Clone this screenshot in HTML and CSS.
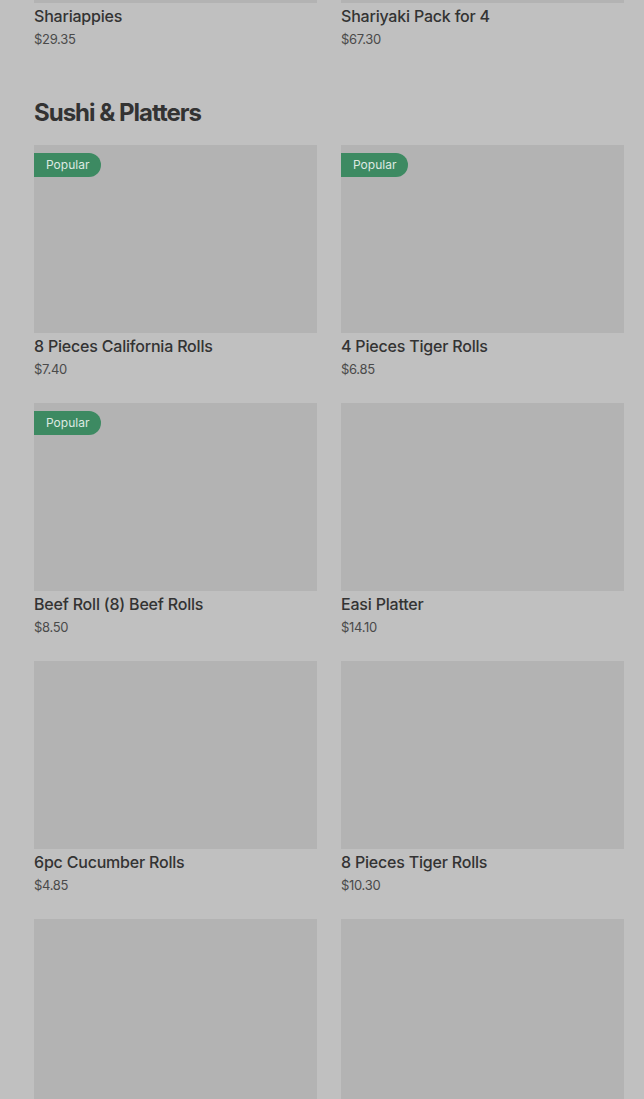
FILE: index.html
```html
<!DOCTYPE html>
<html lang="en">
<head>
<meta charset="utf-8">
<title>Menu</title>
<link rel="stylesheet" href="styles.css">
</head>
<body>
<main class="menu">
  <section class="section">
    <div class="grid">
      <article class="card">
        <div class="thumb"></div>
        <h3 class="name">Shariappies</h3>
        <p class="price">$29.35</p>
      </article>
      <article class="card">
        <div class="thumb"></div>
        <h3 class="name">Shariyaki Pack for 4</h3>
        <p class="price">$67.30</p>
      </article>
    </div>
  </section>

  <section class="section">
    <h2 class="section-title">Sushi &amp; Platters</h2>
    <div class="grid">
      <article class="card">
        <div class="thumb"><span class="badge">Popular</span></div>
        <h3 class="name">8 Pieces California Rolls</h3>
        <p class="price">$7.40</p>
      </article>
      <article class="card">
        <div class="thumb"><span class="badge">Popular</span></div>
        <h3 class="name">4 Pieces Tiger Rolls</h3>
        <p class="price">$6.85</p>
      </article>
      <article class="card">
        <div class="thumb"><span class="badge">Popular</span></div>
        <h3 class="name">Beef Roll (8) Beef Rolls</h3>
        <p class="price">$8.50</p>
      </article>
      <article class="card">
        <div class="thumb"></div>
        <h3 class="name">Easi Platter</h3>
        <p class="price">$14.10</p>
      </article>
      <article class="card">
        <div class="thumb"></div>
        <h3 class="name">6pc Cucumber Rolls</h3>
        <p class="price">$4.85</p>
      </article>
      <article class="card">
        <div class="thumb"></div>
        <h3 class="name">8 Pieces Tiger Rolls</h3>
        <p class="price">$10.30</p>
      </article>
      <article class="card">
        <div class="thumb"></div>
      </article>
      <article class="card">
        <div class="thumb"></div>
      </article>
    </div>
  </section>
</main>
</body>
</html>
```

FILE: styles.css
```css
html, body {
  margin: 0;
  padding: 0;
  background: #c0c0c0;
  overflow: hidden;
}
body {
  font-family: Inter, "Noto Sans", "Liberation Sans", sans-serif;
  color: #333333;
  height: 1099px;
}
.menu {
  padding: 0 20px 0 34px;
  margin-top: -185px;
}
.grid {
  display: grid;
  grid-template-columns: 283px 283px;
  column-gap: 24px;
  row-gap: 25px;
}
.card {
  display: flex;
  flex-direction: column;
}
.thumb {
  position: relative;
  height: 188px;
  background: #b3b3b3;
}
.badge {
  position: absolute;
  left: 0;
  top: 8px;
  height: 24px;
  line-height: 24px;
  padding: 0 12px;
  background: #3d8a62;
  color: #dde9e1;
  font-size: 12px;
  border-radius: 0 12px 12px 0;
}
.name {
  margin: 3px 0 0;
  font-size: 16px;
  line-height: 20px;
  font-weight: 500;
  letter-spacing: -0.2px;
  color: #333333;
}
.price {
  margin: 4px 0 0;
  font-size: 13px;
  line-height: 18px;
  font-weight: 400;
  letter-spacing: -0.3px;
  color: #4a4a4a;
}
.section-title {
  margin: 51px 0 18px;
  font-size: 24px;
  line-height: 28px;
  font-weight: 700;
  color: #333333;
  letter-spacing: -1px;
}
```
